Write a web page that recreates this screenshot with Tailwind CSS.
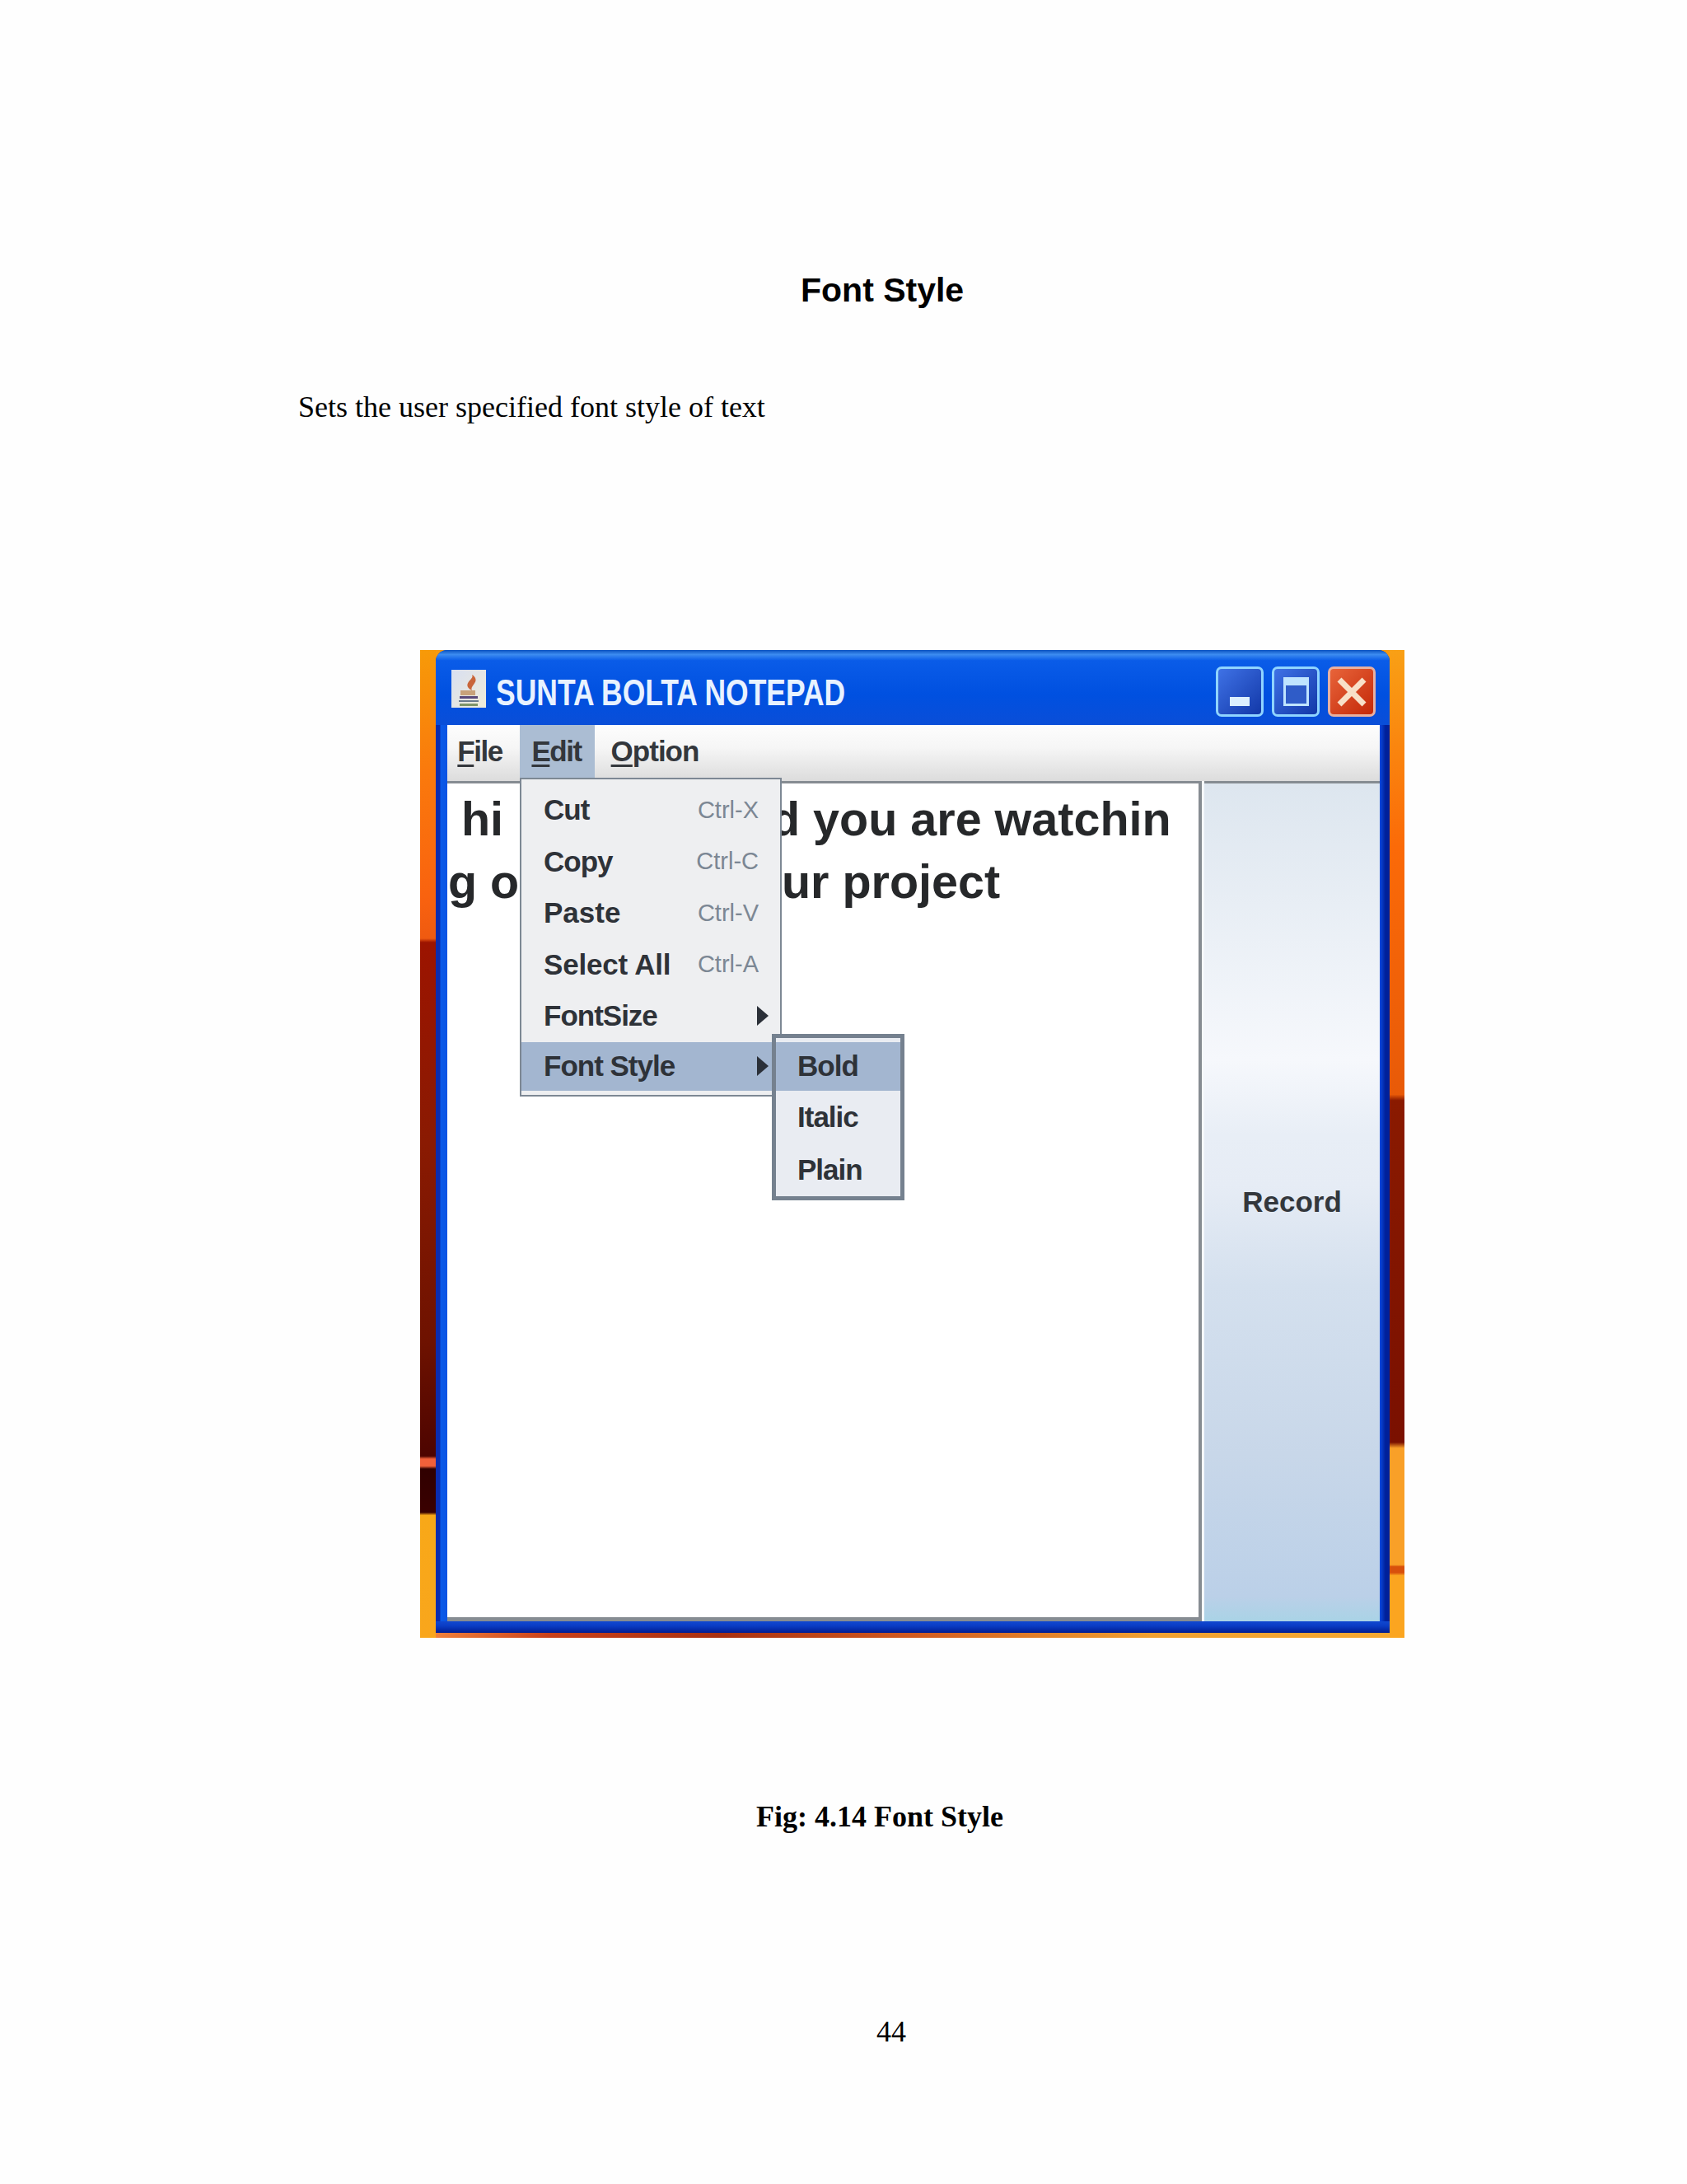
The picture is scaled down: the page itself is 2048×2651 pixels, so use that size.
<!DOCTYPE html>
<html>
<head>
<meta charset="utf-8">
<script src="https://cdn.jsdelivr.net/npm/@tailwindcss/browser@4"></script>
</head>
<body class="bg-[#fefefe]">
<main class="relative h-[2651px] w-[2048px] overflow-hidden bg-[#fefefe] text-black">
  <section class="flex flex-col">
    <h1 class="mt-[328px] ml-[972px] font-['Liberation_Sans',sans-serif] text-[41px] leading-[48px] font-bold whitespace-nowrap">Font Style</h1>
    <p class="mt-[96px] ml-[362px] font-['Liberation_Serif',serif] text-[36px] leading-[44px] whitespace-nowrap">Sets the user specified font style of text</p>

    <!-- screenshot -->
    <div class="mt-[273px] ml-[510px] flex h-[1199px] w-[1195px]">
      <div class="w-[19px] shrink-0 bg-[linear-gradient(180deg,#f79a08_0%,#fa7a0c_12%,#f9620f_25%,#ef5a10_29.2%,#9c1400_29.6%,#8a1a02_50%,#6e1200_70%,#4d0400_81.6%,#f0603a_81.9%,#f0603a_82.6%,#300000_82.9%,#3a0000_87.3%,#f8a818_87.6%,#f9a61c_100%)]"></div>
      <div class="flex min-w-0 flex-1 flex-col bg-[#f79a10]">
        <div class="flex min-h-0 flex-1 flex-col rounded-t-[14px] bg-[linear-gradient(90deg,#0a2cb0_0px,#0a2cb0_5px,#0a5ae8_6px,#0a54e4_14px,#0a4ae0_1146px,#00209a_1153px,#00209a_100%)]">
          <!-- title bar -->
          <div class="flex h-[91px] shrink-0 items-start rounded-t-[14px] bg-[linear-gradient(180deg,#0a52c0_0%,#3c8cf0_6%,#0a5ce8_14%,#0050e0_60%,#0a4ed8_100%)] pt-[24px] pr-[17px] pl-[19px]">
            <svg class="mr-[12px] h-[46px] w-[42px] shrink-0" viewBox="0 0 42 46">
              <defs><linearGradient id="ic" x1="0" y1="0" x2="1" y2="1"><stop offset="0" stop-color="#d8dff2"/><stop offset="1" stop-color="#f0ecd8"/></linearGradient></defs>
              <rect width="42" height="46" fill="url(#ic)"/>
              <path d="M25 6c3 5-8 8-5 15 1 2 3 3 5 4-3-5 7-9 4-15-1-2-2-3-4-4z" fill="#c9653a"/>
              <path d="M11 25h18v6h-18z" fill="#c8a27a"/>
              <path d="M10 32h22v3H10z" fill="#5a4a7a"/>
              <path d="M9 37h24v2H9z" fill="#6a7a8c"/>
              <path d="M10 41h22v3H10z" fill="#7f9468"/>
            </svg>
            <span class="mt-[6px] origin-left scale-x-[0.806] font-['Liberation_Sans',sans-serif] text-[44px] leading-none font-bold text-[#e8f2ff] whitespace-nowrap">SUNTA BOLTA NOTEPAD</span>
            <div class="-mt-[4px] ml-auto flex gap-[10px]">
              <div class="flex h-[61px] w-[58px] items-end justify-center rounded-[7px] border-[3px] border-[#8fd4ff] bg-[linear-gradient(135deg,#3f72e6,#1238a8)] pb-[10px]">
                <div class="h-[11px] w-[24px] bg-[#dcefff]"></div>
              </div>
              <div class="flex h-[61px] w-[58px] items-center justify-center rounded-[7px] border-[3px] border-[#8fd4ff] bg-[linear-gradient(135deg,#3f72e6,#1238a8)]">
                <div class="h-[35px] w-[31px] border-[3px] border-t-[10px] border-[#bfe4ff] bg-[#2f5cc8]"></div>
              </div>
              <div class="flex h-[61px] w-[58px] items-center justify-center rounded-[7px] border-[3px] border-[#e8b0a0] bg-[linear-gradient(135deg,#e8643a,#c42808)]">
                <svg class="h-[40px] w-[40px]" viewBox="0 0 40 40"><path d="M5 5 35 35M35 5 5 35" stroke="#f8e0c8" stroke-width="7"/></svg>
              </div>
            </div>
          </div>
          <!-- client -->
          <div class="flex min-h-0 flex-1 flex-col pr-[12px] pl-[14px]">
            <!-- menu bar -->
            <div class="flex h-[68px] shrink-0 items-stretch bg-[linear-gradient(180deg,#fdfdfd_0%,#f6f6f6_40%,#dcdcdc_100%)] font-['Liberation_Sans',sans-serif] text-[35px] font-bold text-[#33373c]">
              <span class="flex w-[88px] items-center justify-center pr-[9px] pb-[4px] tracking-[-1.5px]"><span class="underline underline-offset-4">F</span>ile</span>
              <span class="flex w-[91px] items-center justify-center bg-[#abbdd3] pr-[2px] pb-[4px] tracking-[-1.5px]"><span class="underline underline-offset-4">E</span>dit</span>
              <span class="flex w-[145px] items-center justify-center pl-[1px] pb-[4px] tracking-[-1px]"><span class="underline underline-offset-4">O</span>ption</span>
            </div>
            <!-- body -->
            <div class="flex min-h-0 flex-1">
              <div class="flex w-[916px] shrink-0 border-t-[3px] border-r-[4px] border-b-[5px] border-[#868c92] bg-white font-['Liberation_Sans',sans-serif] text-[57.5px] leading-[76px] font-bold text-[#26282a]">
                <div class="w-[393px] shrink-0 pt-[5px] whitespace-nowrap">
                  <div class="pl-[17px]">hi</div>
                  <div class="pl-[1px]">g o</div>
                </div>
                <div class="pt-[5px] whitespace-nowrap">
                  <div>d you are watchin</div>
                  <div class="pl-[13px]">ur project</div>
                </div>
              </div>
              <div class="w-[3px] shrink-0 bg-[#f5f8fb]"></div>
              <div class="flex flex-1 items-center justify-center border-t-[3px] border-[#868c92] bg-[linear-gradient(180deg,#dde6ef_0%,#f6f8fc_33%,#e8eef6_42%,#e6ecf5_48%,#d4e0ee_60%,#c8d7e9_80%,#bbd0e8_97%,#a9d3e6_100%)] font-['Liberation_Sans',sans-serif] text-[35px] font-bold text-[#33373c]">Record</div>
            </div>
          </div>
          <div class="h-[14px] shrink-0 bg-[linear-gradient(180deg,#1048d0_0%,#0a3cc4_40%,#001c90_100%)]"></div>
        </div>
        <div class="h-[6px] shrink-0 bg-[linear-gradient(90deg,#f0803a_0%,#c8401a_12%,#a83010_30%,#d05a20_50%,#f0a030_75%,#f5a832_100%)]"></div>
      </div>
      <div class="w-[18px] shrink-0 bg-[linear-gradient(180deg,#f9a015_0%,#fb6a08_20%,#e85a08_45%,#8a1a00_45.6%,#7a1000_80.2%,#f9a028_80.8%,#f9a028_92.6%,#d8500c_92.8%,#d8500c_93.4%,#fba520_93.7%,#fba520_100%)]"></div>
    </div>

    <p class="mt-[195px] ml-[918px] font-['Liberation_Serif',serif] text-[36px] leading-[44px] font-bold whitespace-nowrap">Fig: 4.14 Font Style</p>
    <p class="mt-[217px] ml-[1064px] font-['Liberation_Serif',serif] text-[36px] leading-[44px]">44</p>
  </section>

  <!-- Edit menu -->
  <div class="absolute top-[944px] left-[631px] flex h-[387px] w-[318px] flex-col border-2 border-[#7d8894] bg-[#eeeff1] pt-[6px] font-['Liberation_Sans',sans-serif] text-[35px] font-bold text-[#2e3238]">
    <div class="flex h-[62.5px] items-center justify-between pr-[26px] pl-[27px]"><span class="tracking-[-1px]">Cut</span><span class="text-[29px] font-normal text-[#7c8794]">Ctrl-X</span></div>
    <div class="flex h-[62.5px] items-center justify-between pr-[26px] pl-[27px]"><span class="tracking-[-1px]">Copy</span><span class="text-[29px] font-normal text-[#7c8794]">Ctrl-C</span></div>
    <div class="flex h-[62.5px] items-center justify-between pr-[26px] pl-[27px]"><span>Paste</span><span class="text-[29px] font-normal text-[#7c8794]">Ctrl-V</span></div>
    <div class="flex h-[62.5px] items-center justify-between pr-[26px] pl-[27px]"><span class="tracking-[-0.2px]">Select All</span><span class="text-[29px] font-normal text-[#7c8794]">Ctrl-A</span></div>
    <div class="flex h-[62.5px] items-center justify-between pr-[14px] pl-[27px]"><span class="tracking-[-1px]">FontSize</span><svg class="h-[24px] w-[14px]" viewBox="0 0 14 24"><path d="M0 0 14 12 0 24z" fill="#2b3038"/></svg></div>
    <div class="flex h-[59px] items-center justify-between bg-[#a3b6d0] pr-[14px] pl-[27px]"><span class="tracking-[-1px]">Font Style</span><svg class="h-[24px] w-[14px]" viewBox="0 0 14 24"><path d="M0 0 14 12 0 24z" fill="#2b3038"/></svg></div>
  </div>

  <!-- Font Style submenu -->
  <div class="absolute top-[1255px] left-[937px] flex h-[202px] w-[161px] flex-col border-[5px] border-[#75818f] bg-[#e9ecf2] pt-[5px] font-['Liberation_Sans',sans-serif] text-[35px] font-bold text-[#2e3238]">
    <div class="flex h-[59px] items-center bg-[#a3b6d0] pl-[26px]"><span class="tracking-[-1px]">Bold</span></div>
    <div class="flex h-[64px] items-center pl-[26px]"><span class="tracking-[-1px]">Italic</span></div>
    <div class="flex h-[64px] items-center pl-[26px]"><span class="tracking-[-1px]">Plain</span></div>
  </div>
</main>
</body>
</html>
